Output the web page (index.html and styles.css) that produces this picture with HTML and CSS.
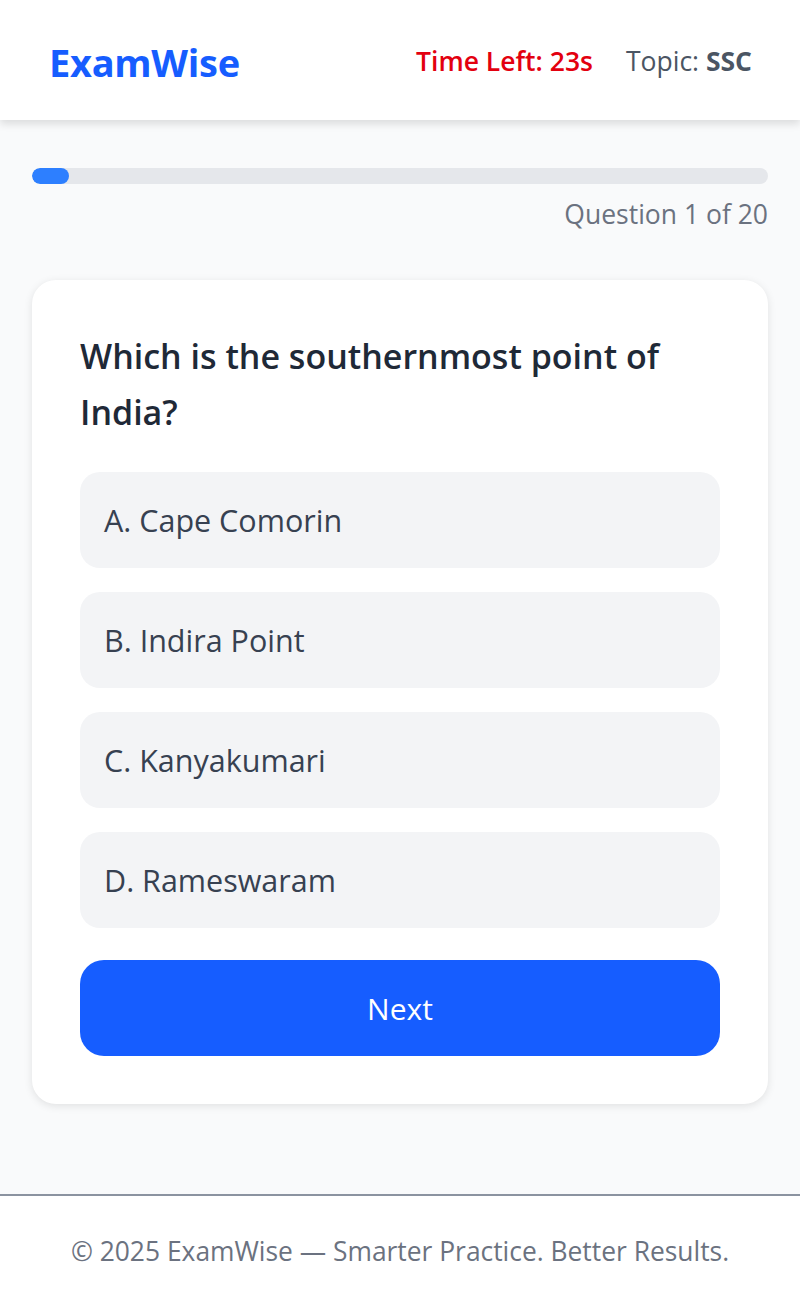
FILE: index.html
```html
<!DOCTYPE html>
<html lang="en">
<head>
<meta charset="utf-8">
<title>ExamWise</title>
<link rel="stylesheet" href="styles.css">
</head>
<body>
<header class="topbar">
  <div class="logo">ExamWise</div>
  <div class="meta">
    <span class="timer">Time Left: 23s</span>
    <span class="topic">Topic: <b>SSC</b></span>
  </div>
</header>
<main class="main">
  <div class="progress"><div class="progress-fill" style="width:5%"></div></div>
  <div class="counter">Question 1 of 20</div>
  <section class="card">
    <h2 class="question">Which is the southernmost point of India?</h2>
    <div class="options">
      <div class="option">A. Cape Comorin</div>
      <div class="option">B. Indira Point</div>
      <div class="option">C. Kanyakumari</div>
      <div class="option">D. Rameswaram</div>
    </div>
    <button class="next">Next</button>
  </section>
</main>
<footer class="footer">© 2025 ExamWise — Smarter Practice. Better Results.</footer>
</body>
</html>
```
FILE: styles.css
```css
* { box-sizing: border-box; }
html, body { margin: 0; padding: 0; }
body {
  font-family: "Open Sans", "Noto Sans", sans-serif;
  background: #f9fafb;
  color: #1f2937;
  width: 800px;
  min-height: 1300px;
  display: flex;
  flex-direction: column;
}
.topbar {
  height: 120px;
  background: #fff;
  display: flex;
  align-items: center;
  justify-content: space-between;
  padding: 0 48px 0 49px;
  box-shadow: 0 4px 8px rgba(0,0,0,0.12);
  position: relative;
  z-index: 1;
}
.logo {
  font-size: 38px;
  font-weight: 700;
  color: #165dff;
  letter-spacing: -0.3px;
  margin-top: 3px;
}
.meta {
  display: flex;
  gap: 33px;
  font-size: 26.5px;
  margin-top: 2px;
}
.timer { color: #e3000f; font-weight: 600; }
.topic { color: #4b5563; }
.topic b { font-weight: 700; }
.main {
  flex: 1;
  padding: 48px 32px 90px;
}
.progress {
  height: 16px;
  background: #e5e7eb;
  border-radius: 8px;
  overflow: hidden;
}
.progress-fill {
  height: 100%;
  background: #2d7fff;
  border-radius: 8px;
}
.counter {
  text-align: right;
  font-size: 26.5px;
  color: #6b7280;
  margin-top: 12px;
  line-height: 36px;
}
.card {
  margin-top: 48px;
  background: #fff;
  border-radius: 24px;
  box-shadow: 0 2px 8px rgba(0,0,0,0.1);
  padding: 48px;
}
.question {
  margin: 0 0 32px;
  font-size: 34px;
  font-weight: 600;
  line-height: 56px;
  color: #1f2937;
}
.options {
  display: flex;
  flex-direction: column;
  gap: 24px;
}
.option {
  height: 96px;
  display: flex;
  align-items: center;
  padding: 0 24px;
  background: #f3f4f6;
  border-radius: 20px;
  font-size: 30.5px;
  color: #374151;
}
.next {
  margin-top: 32px;
  width: 100%;
  height: 96px;
  border: none;
  border-radius: 24px;
  background: #165dff;
  color: #fff;
  font-family: inherit;
  font-size: 30px;
}
.footer {
  border-top: 2px solid #8b93a0;
  background: #fff;
  text-align: center;
  font-size: 26.4px;
  color: #6b7280;
  height: 106px;
  padding-top: 5px;
  display: flex;
  align-items: center;
  justify-content: center;
}
```
